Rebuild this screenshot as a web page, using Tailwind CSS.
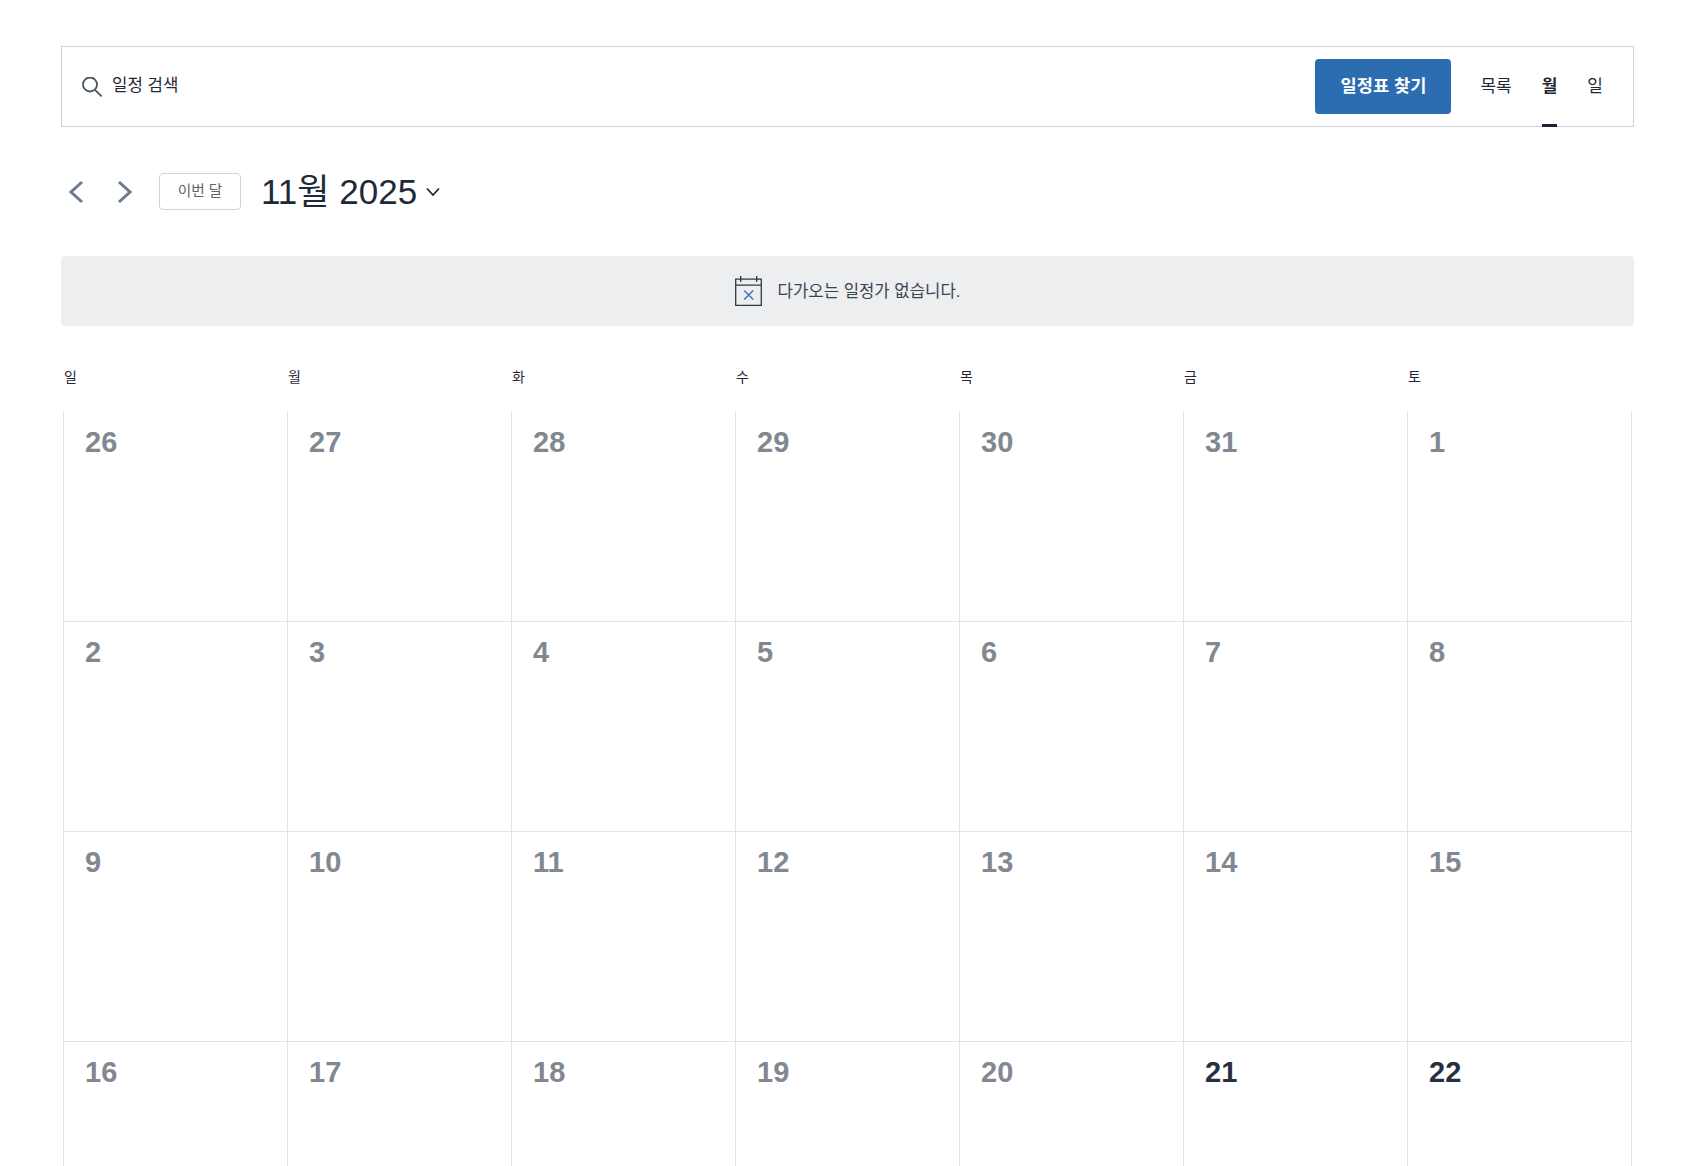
<!DOCTYPE html>
<html lang="ko">
<head>
    <meta charset="UTF-8">
    <title>일정</title>
    <script src="https://cdn.jsdelivr.net/npm/@tailwindcss/browser@4"></script>
</head>
<body class="bg-white h-[1166px] overflow-hidden font-['Liberation_Sans','Noto_Sans_CJK_KR',sans-serif] text-[#1f2937]">
<div class="ml-[61px] w-[1573px] pt-[46px]">

    <!-- search bar -->
    <div class="h-[81px] border border-[#c8d4e2] flex items-center pl-[20px] pr-[30px]">
        <svg class="w-[20px] h-[20px] text-[#4b5563]" viewBox="0 0 20 20" fill="none" stroke="currentColor" stroke-width="1.8">
            <circle cx="8" cy="7.5" r="7"/>
            <path d="M13 12.8 L19.6 19.4"/>
        </svg>
        <span class="ml-[10px] pb-[1px] text-[16.8px]">일정 검색</span>
        <button class="ml-auto w-[136px] h-[55px] rounded bg-[#2c6cb0] text-white font-bold text-[17.6px]">일정표 찾기</button>
        <div class="ml-[29px] flex h-full items-center gap-[30px] text-[17px]">
            <span>목록</span>
            <span class="relative h-full flex items-center font-bold">월<span class="absolute left-0 right-0 -bottom-px h-[3px] bg-[#1a2233]"></span></span>
            <span>일</span>
        </div>
    </div>

    <!-- month nav -->
    <div class="mt-[46px] h-[37px] flex items-center">
        <svg class="ml-[7px] w-[16px] h-[24px] text-[#6b7a90]" viewBox="0 0 16 24" fill="none" stroke="currentColor" stroke-width="3">
            <path d="M14 2 L3 12 L14 22"/>
        </svg>
        <svg class="ml-[33px] w-[16px] h-[24px] text-[#6b7a90]" viewBox="0 0 16 24" fill="none" stroke="currentColor" stroke-width="3">
            <path d="M2 2 L13 12 L2 22"/>
        </svg>
        <button class="ml-[26px] w-[82px] h-[37px] rounded border border-[#c8d4e2] text-[14.7px] text-[#5d6470]">이번 달</button>
        <span class="ml-[20px] text-[35px] leading-none">11월 2025</span>
        <svg class="ml-[9px] w-[14px] h-[10px]" viewBox="0 0 14 10" fill="none" stroke="currentColor" stroke-width="1.8">
            <path d="M1 1.5 L7 8 L13 1.5"/>
        </svg>
    </div>

    <!-- notice -->
    <div class="mt-[46px] h-[70px] rounded bg-[#eceef0] flex items-center justify-center gap-[16px] text-[16.7px] text-[#3b4350]">
        <svg class="w-[27px] h-[30px]" viewBox="0 0 27 30" fill="none" stroke="#2f3746" stroke-width="1.3">
            <path d="M0.7 3.2 H26.3 V29.3 H0.7 Z M0.7 9.2 H26.3 M5.7 0 V6 M21.7 0 V6"/>
            <path d="M9.2 14.5 L18.2 23.5 M18.2 14.5 L9.2 23.5" stroke="#3b78bd" stroke-width="1.5"/>
        </svg>
        <span class="pt-[1px]">다가오는 일정가 없습니다.</span>
    </div>

    <!-- weekdays -->
    <div class="ml-[3px] h-[85px] pt-[41px] grid grid-cols-[repeat(7,224px)] text-sm leading-5">
        <span>일</span><span>월</span><span>화</span><span>수</span><span>목</span><span>금</span><span>토</span>
    </div>

    <!-- month grid -->
    <div class="ml-[2px] w-[1569px] grid grid-cols-[repeat(7,224px)] auto-rows-[210px] border-r border-[#e1e3e6] text-[29px] font-bold leading-none text-[#828892]">
        <div class="border-l border-[#e1e3e6] pl-[21px] pt-[17px]">26</div>
        <div class="border-l border-[#e1e3e6] pl-[21px] pt-[17px]">27</div>
        <div class="border-l border-[#e1e3e6] pl-[21px] pt-[17px]">28</div>
        <div class="border-l border-[#e1e3e6] pl-[21px] pt-[17px]">29</div>
        <div class="border-l border-[#e1e3e6] pl-[21px] pt-[17px]">30</div>
        <div class="border-l border-[#e1e3e6] pl-[21px] pt-[17px]">31</div>
        <div class="border-l border-[#e1e3e6] pl-[21px] pt-[17px]">1</div>

        <div class="border-l border-t border-[#e1e3e6] pl-[21px] pt-[16px]">2</div>
        <div class="border-l border-t border-[#e1e3e6] pl-[21px] pt-[16px]">3</div>
        <div class="border-l border-t border-[#e1e3e6] pl-[21px] pt-[16px]">4</div>
        <div class="border-l border-t border-[#e1e3e6] pl-[21px] pt-[16px]">5</div>
        <div class="border-l border-t border-[#e1e3e6] pl-[21px] pt-[16px]">6</div>
        <div class="border-l border-t border-[#e1e3e6] pl-[21px] pt-[16px]">7</div>
        <div class="border-l border-t border-[#e1e3e6] pl-[21px] pt-[16px]">8</div>

        <div class="border-l border-t border-[#e1e3e6] pl-[21px] pt-[16px]">9</div>
        <div class="border-l border-t border-[#e1e3e6] pl-[21px] pt-[16px]">10</div>
        <div class="border-l border-t border-[#e1e3e6] pl-[21px] pt-[16px]">11</div>
        <div class="border-l border-t border-[#e1e3e6] pl-[21px] pt-[16px]">12</div>
        <div class="border-l border-t border-[#e1e3e6] pl-[21px] pt-[16px]">13</div>
        <div class="border-l border-t border-[#e1e3e6] pl-[21px] pt-[16px]">14</div>
        <div class="border-l border-t border-[#e1e3e6] pl-[21px] pt-[16px]">15</div>

        <div class="border-l border-t border-[#e1e3e6] pl-[21px] pt-[16px]">16</div>
        <div class="border-l border-t border-[#e1e3e6] pl-[21px] pt-[16px]">17</div>
        <div class="border-l border-t border-[#e1e3e6] pl-[21px] pt-[16px]">18</div>
        <div class="border-l border-t border-[#e1e3e6] pl-[21px] pt-[16px]">19</div>
        <div class="border-l border-t border-[#e1e3e6] pl-[21px] pt-[16px]">20</div>
        <div class="border-l border-t border-[#e1e3e6] pl-[21px] pt-[16px] text-[#27303f]">21</div>
        <div class="border-l border-t border-[#e1e3e6] pl-[21px] pt-[16px] text-[#27303f]">22</div>
    </div>
</div>
</body>
</html>
